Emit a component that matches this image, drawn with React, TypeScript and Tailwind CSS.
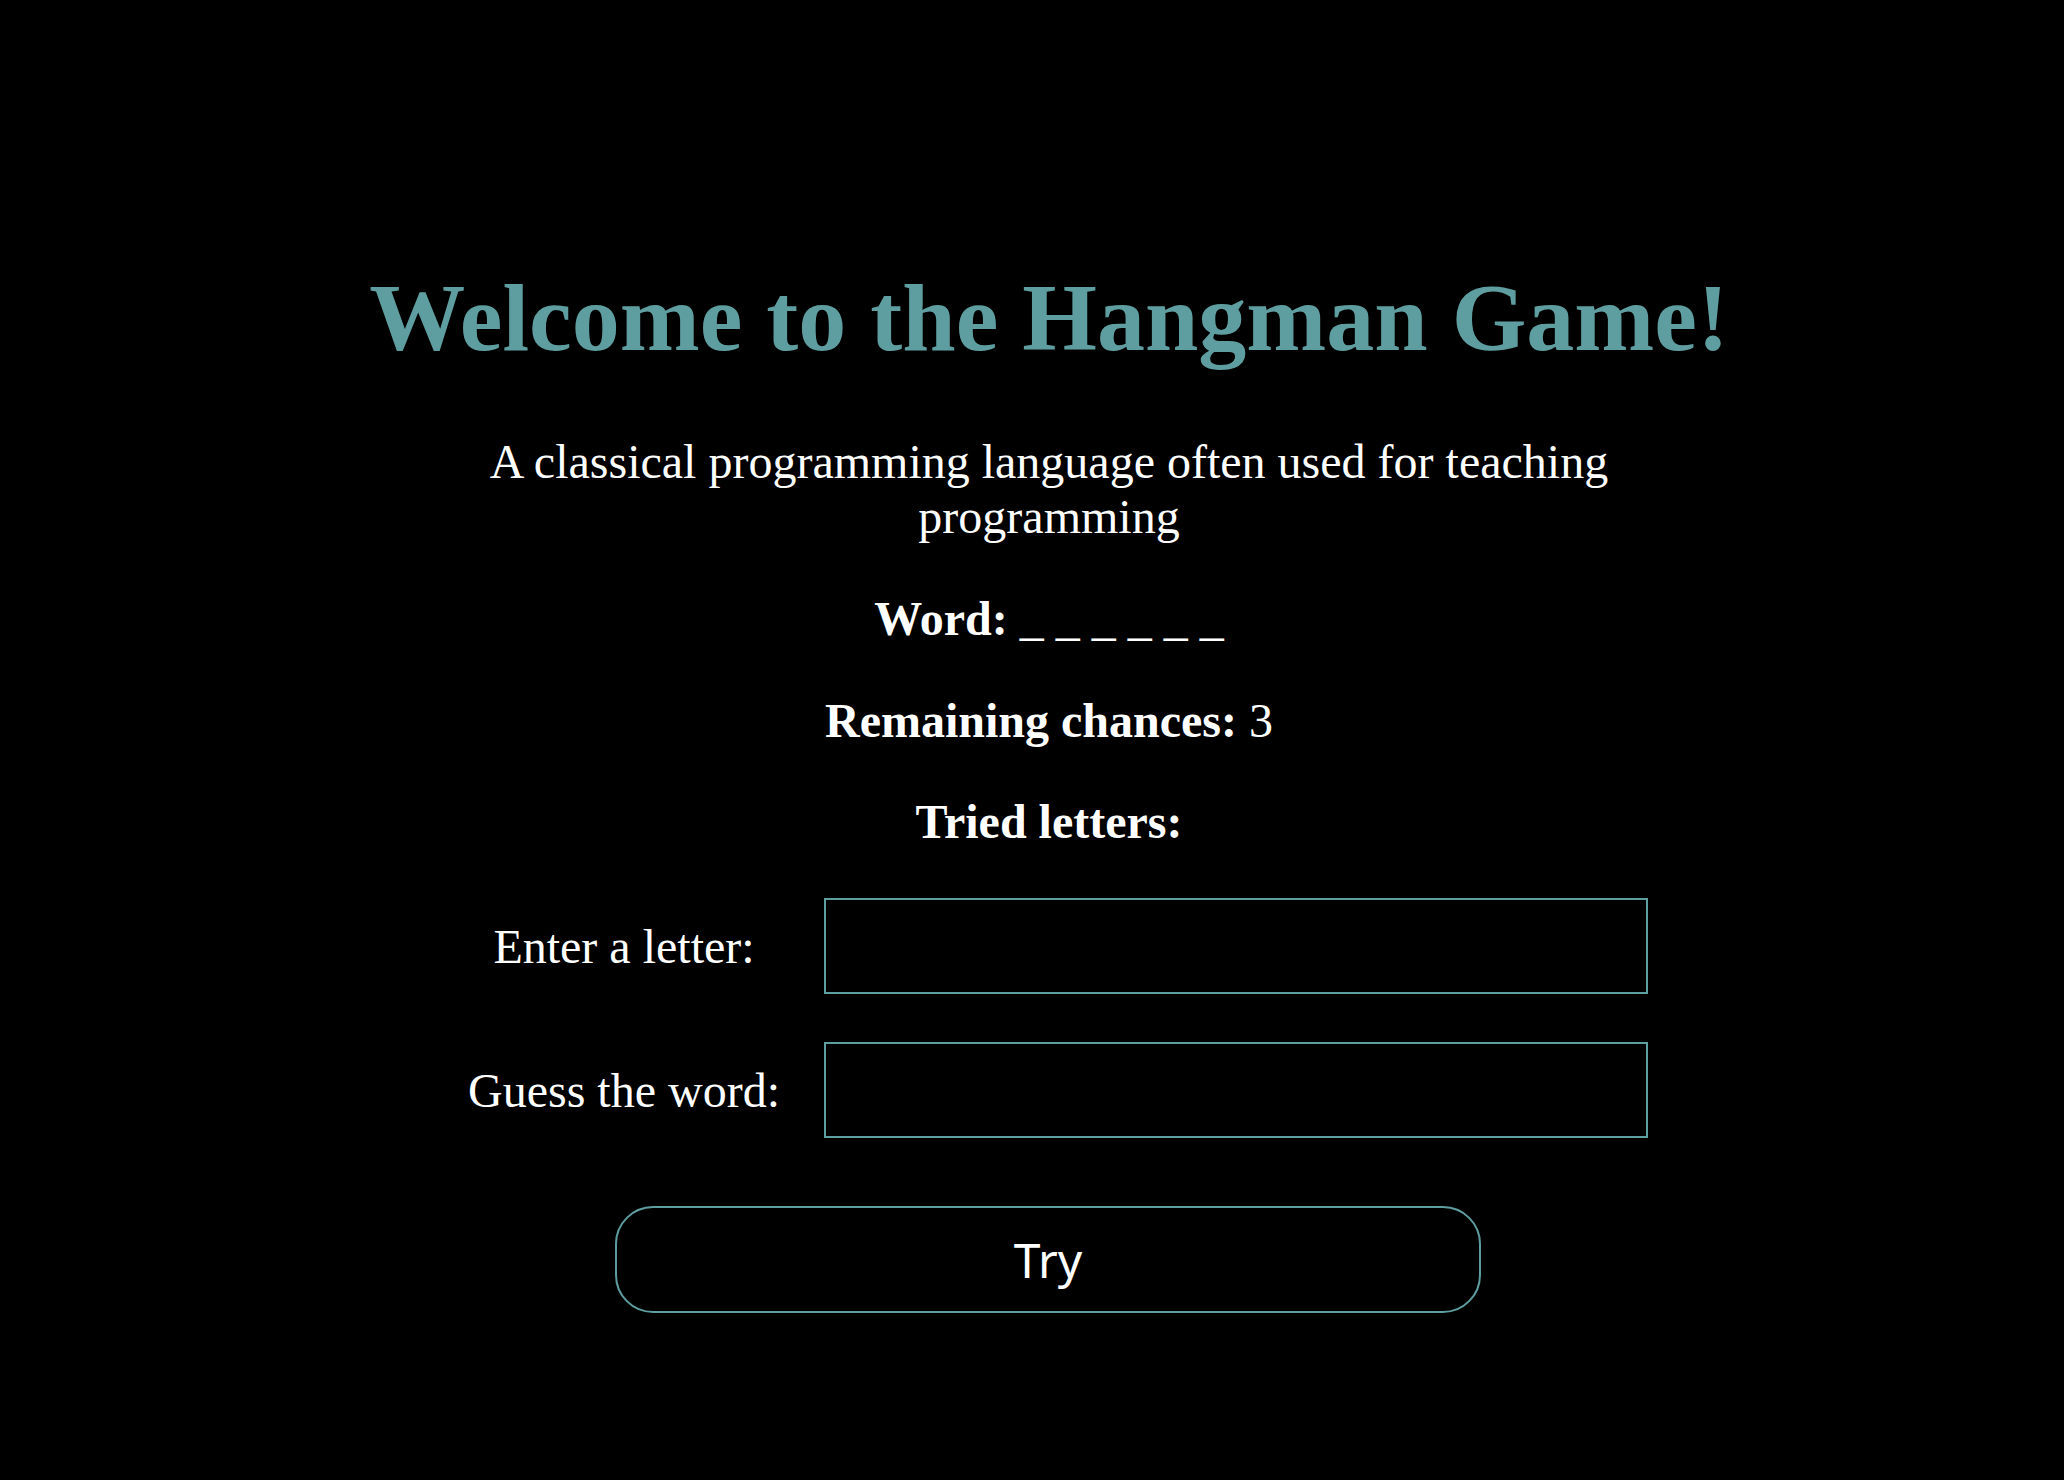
import { useState } from "react";

const serif = "font-['Liberation_Serif','Times_New_Roman',serif]";

export default function App() {
  const [letter, setLetter] = useState("");
  const [guess, setGuess] = useState("");
  const word = "______";
  const chances = 3;
  const tried: string[] = [];

  return (
    <div
      className={`min-h-screen w-full bg-black text-white ${serif} flex flex-col items-center pl-[34px] pt-[263px] pb-[120px]`}
    >
      {/* Title */}
      <h1 className="text-[96px] leading-[110px] font-bold text-[#5f9ea0] text-center whitespace-nowrap">
        Welcome to the Hangman Game!
      </h1>

      {/* Hint */}
      <p className="mt-[61px] max-w-[1200px] text-center text-[48px] leading-[55px]">
        A classical programming language often used for teaching programming
      </p>

      <p className="mt-[47px] text-center text-[48px] leading-[55px]">
        <strong className="font-bold">Word:</strong> {word.split("").join(" ")}
      </p>

      <p className="mt-[47px] text-center text-[48px] leading-[55px]">
        <strong className="font-bold">Remaining chances:</strong> {chances}
      </p>

      <p className="mt-[46px] text-center text-[48px] leading-[55px]">
        <strong className="font-bold">Tried letters:</strong> {tried.join(", ")}
      </p>

      {/* Form */}
      <div className="mt-[49px] mr-[10px] grid grid-cols-[368px_824px] gap-x-[16px] gap-y-[48px] items-center">
        <label htmlFor="letter" className="text-center text-[48px] leading-[55px]">
          Enter a letter:
        </label>
        <input
          id="letter"
          type="text"
          maxLength={1}
          value={letter}
          onChange={(e) => setLetter(e.target.value)}
          className="h-[96px] w-[824px] border-2 border-[#5f9ea0] bg-black px-4 text-[40px] text-white outline-none"
        />
        <label htmlFor="guess" className="text-center text-[48px] leading-[55px]">
          Guess the word:
        </label>
        <input
          id="guess"
          type="text"
          value={guess}
          onChange={(e) => setGuess(e.target.value)}
          className="h-[96px] w-[824px] border-2 border-[#5f9ea0] bg-black px-4 text-[40px] text-white outline-none"
        />
      </div>

      <button
        type="button"
        className="mt-[68px] mr-[2px] h-[107px] w-[866px] rounded-[38px] border-2 border-[#5f9ea0] bg-black text-[48px] text-white font-['Noto_Sans','Open_Sans',sans-serif] cursor-pointer"
      >
        Try
      </button>
    </div>
  );
}
